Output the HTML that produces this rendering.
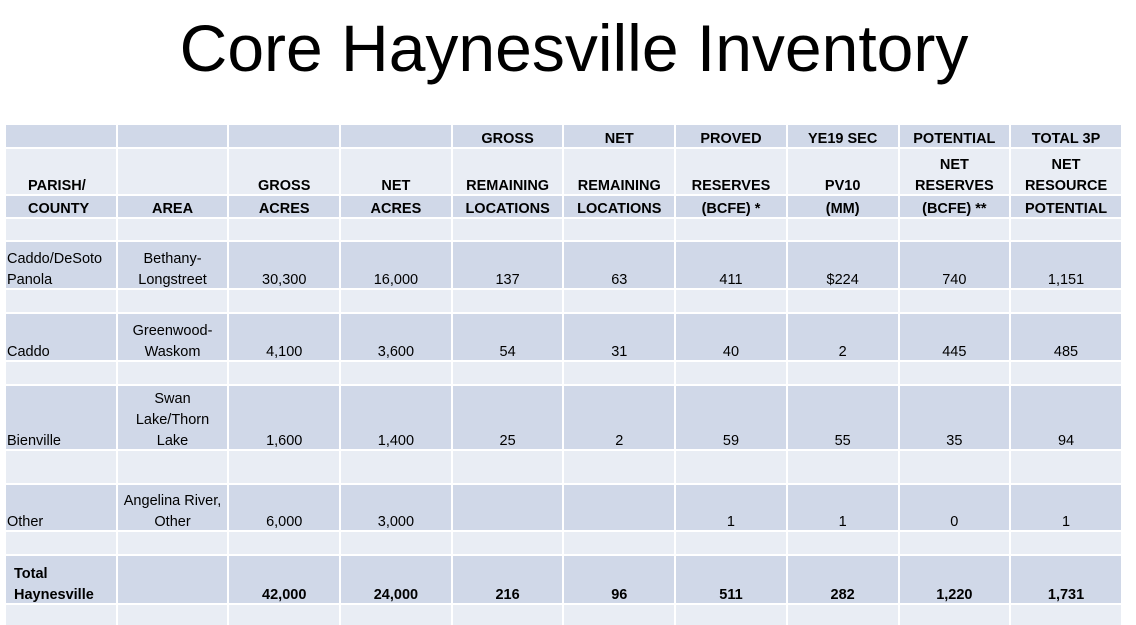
<!DOCTYPE html>
<html><head><meta charset="utf-8"><style>
body{margin:0;width:1136px;height:613px;overflow:hidden;background:#fff;font-family:"Liberation Sans",Arial,sans-serif;position:relative}
h1{position:absolute;left:0;width:1148px;top:10px;margin:0;text-align:center;font-weight:normal;font-size:66px;line-height:76px;color:#000}
.g{position:absolute;left:6px;top:125px;display:grid;grid-template-columns:repeat(10,109.7px);grid-template-rows:22px 45px 21px 21px 46px 22px 46px 22px 63px 32px 45px 22px 47px 20px;gap:2px}
.g div{display:flex;align-items:flex-end;justify-content:center;text-align:center;font-size:14.5px;line-height:16px;padding-bottom:0;white-space:nowrap;overflow:hidden}
.g div.m{line-height:21px}
.m span{position:relative;top:3px}
.d{background:#d0d8e8}.l{background:#e9edf4}
.b{font-weight:bold}
.f{justify-content:flex-start!important;text-align:left!important;padding-left:1px}
</style></head><body>
<h1>Core Haynesville Inventory</h1>
<div class="g">
<div class="d"></div><div class="d"></div><div class="d"></div><div class="d"></div><div class="d b">GROSS</div><div class="d b">NET</div><div class="d b">PROVED</div><div class="d b">YE19 SEC</div><div class="d b">POTENTIAL</div><div class="d b">TOTAL 3P</div>
<div class="l b f" style="padding-left:22px">PARISH/</div><div class="l"></div><div class="l b">GROSS</div><div class="l b">NET</div><div class="l b">REMAINING</div><div class="l b">REMAINING</div><div class="l b">RESERVES</div><div class="l b">PV10</div><div class="l b m"><span>NET<br>RESERVES</span></div><div class="l b m"><span>NET<br>RESOURCE</span></div>
<div class="d b f" style="padding-left:22px">COUNTY</div><div class="d b">AREA</div><div class="d b">ACRES</div><div class="d b">ACRES</div><div class="d b">LOCATIONS</div><div class="d b">LOCATIONS</div><div class="d b">(BCFE) *</div><div class="d b">(MM)</div><div class="d b">(BCFE) **</div><div class="d b">POTENTIAL</div>
<div class="l"></div><div class="l"></div><div class="l"></div><div class="l"></div><div class="l"></div><div class="l"></div><div class="l"></div><div class="l"></div><div class="l"></div><div class="l"></div>
<div class="d f m"><span>Caddo/DeSoto<br>Panola</span></div><div class="d m"><span>Bethany-<br>Longstreet</span></div><div class="d">30,300</div><div class="d">16,000</div><div class="d">137</div><div class="d">63</div><div class="d">411</div><div class="d">$224</div><div class="d">740</div><div class="d">1,151</div>
<div class="l"></div><div class="l"></div><div class="l"></div><div class="l"></div><div class="l"></div><div class="l"></div><div class="l"></div><div class="l"></div><div class="l"></div><div class="l"></div>
<div class="d f">Caddo</div><div class="d m"><span>Greenwood-<br>Waskom</span></div><div class="d">4,100</div><div class="d">3,600</div><div class="d">54</div><div class="d">31</div><div class="d">40</div><div class="d">2</div><div class="d">445</div><div class="d">485</div>
<div class="l"></div><div class="l"></div><div class="l"></div><div class="l"></div><div class="l"></div><div class="l"></div><div class="l"></div><div class="l"></div><div class="l"></div><div class="l"></div>
<div class="d f">Bienville</div><div class="d m"><span>Swan<br>Lake/Thorn<br>Lake</span></div><div class="d">1,600</div><div class="d">1,400</div><div class="d">25</div><div class="d">2</div><div class="d">59</div><div class="d">55</div><div class="d">35</div><div class="d">94</div>
<div class="l"></div><div class="l"></div><div class="l"></div><div class="l"></div><div class="l"></div><div class="l"></div><div class="l"></div><div class="l"></div><div class="l"></div><div class="l"></div>
<div class="d f">Other</div><div class="d m"><span>Angelina River,<br>Other</span></div><div class="d">6,000</div><div class="d">3,000</div><div class="d"></div><div class="d"></div><div class="d">1</div><div class="d">1</div><div class="d">0</div><div class="d">1</div>
<div class="l"></div><div class="l"></div><div class="l"></div><div class="l"></div><div class="l"></div><div class="l"></div><div class="l"></div><div class="l"></div><div class="l"></div><div class="l"></div>
<div class="d b f m" style="padding-left:8px"><span>Total<br>Haynesville</span></div><div class="d"></div><div class="d b">42,000</div><div class="d b">24,000</div><div class="d b">216</div><div class="d b">96</div><div class="d b">511</div><div class="d b">282</div><div class="d b">1,220</div><div class="d b">1,731</div>
<div class="l"></div><div class="l"></div><div class="l"></div><div class="l"></div><div class="l"></div><div class="l"></div><div class="l"></div><div class="l"></div><div class="l"></div><div class="l"></div>
</div>
</body></html>
